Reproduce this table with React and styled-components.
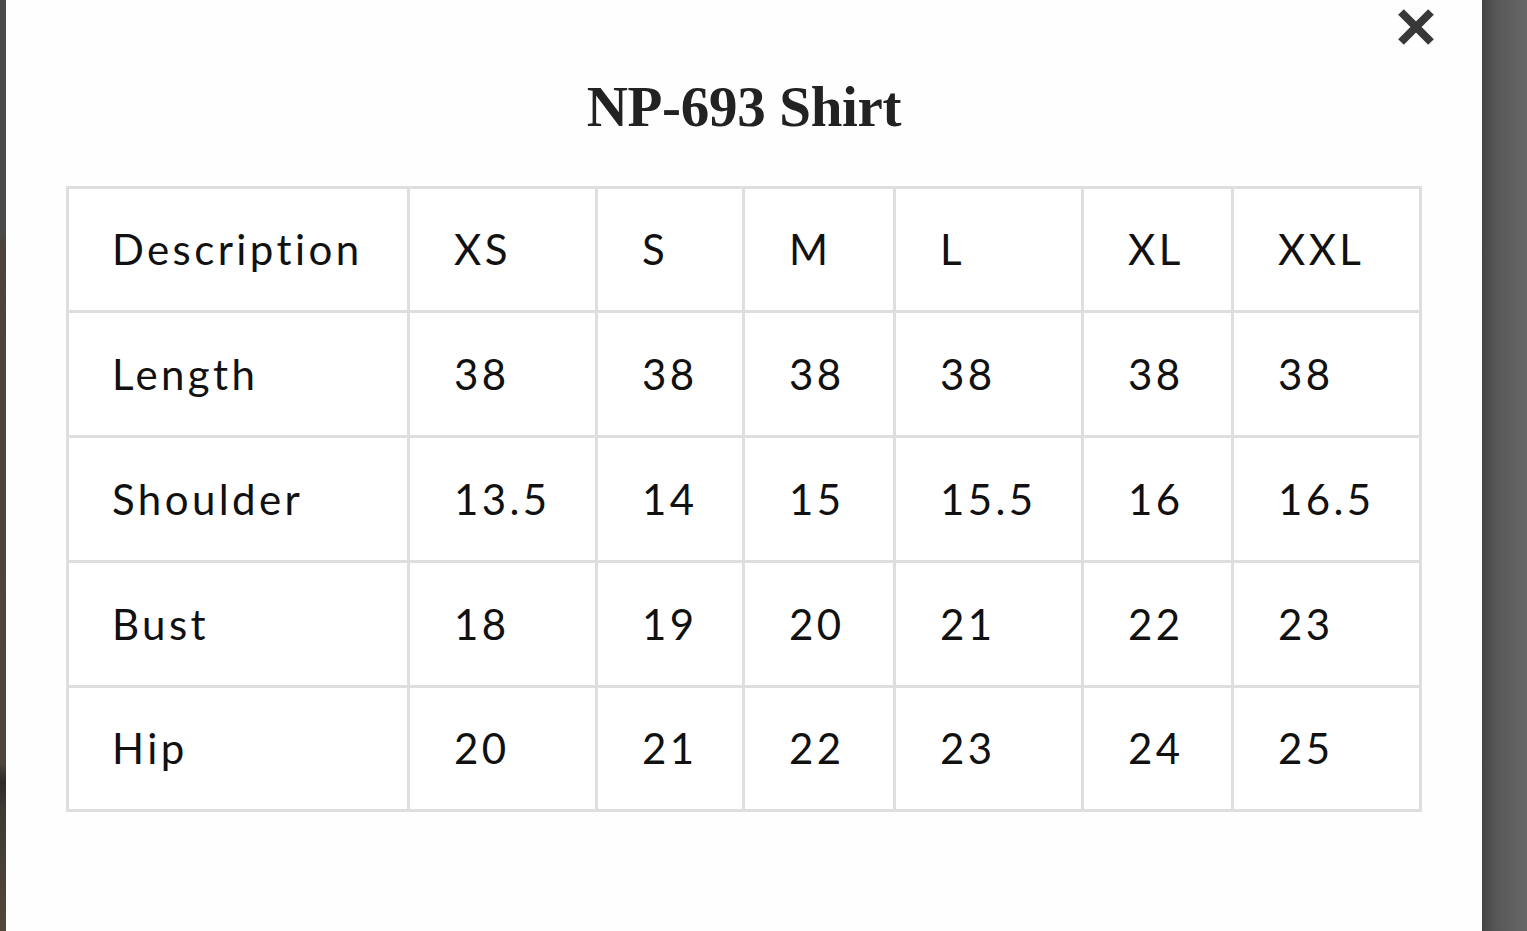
import React from "react";
import styled, { createGlobalStyle } from "styled-components";

const GlobalStyle = createGlobalStyle`
  html, body {
    margin: 0;
    padding: 0;
    background: #4b4b4b;
  }
  body {
    font-family: Lato, "Liberation Sans", sans-serif;
  }
`;

const Page = styled.div`
  display: flex;
  height: 931px;
  width: 1527px;
  overflow: hidden;
`;

const LeftEdge = styled.div`
  width: 6px;
  flex-shrink: 0;
  background: linear-gradient(
    to bottom,
    #4a4a4a 0%,
    #4a4a4a 25%,
    #4c443c 26%,
    #4e463e 82%,
    #2f2a25 84%,
    #3f3a32 87%,
    #54493a 100%
  );
`;

const RightEdge = styled.div`
  flex: 1;
  background: linear-gradient(to right, #454545 0%, #575757 30%, #676767 100%);
`;

const Modal = styled.div`
  position: relative;
  width: 1476px;
  flex-shrink: 0;
  background: #fefefe;
  padding: 0 60px;
  box-sizing: border-box;
`;

const CloseButton = styled.button`
  position: absolute;
  top: 7px;
  right: 46px;
  width: 40px;
  height: 40px;
  padding: 0;
  border: none;
  background: transparent;
  cursor: pointer;
`;

const Title = styled.h2`
  margin: 72px 0 0;
  height: 70px;
  line-height: 70px;
  text-align: center;
  font-family: "Liberation Serif", "DejaVu Serif", serif;
  font-weight: bold;
  font-size: 57px;
  color: #222;
  letter-spacing: -0.3px;
`;

const Grid = styled.div`
  margin-top: 44px;
  display: grid;
  grid-template-columns: 338px 185px 144px 148px 185px 147px 185px;
  grid-template-rows: 121px 122px 122px 122px 121px;
  gap: 3px;
  padding: 3px;
  background: #dedede;
`;

const Cell = styled.div`
  background: #fff;
  display: flex;
  align-items: center;
  padding-left: ${(p) => (p.$first ? "43px" : "44px")};
  padding-bottom: 1px;
  font-size: 42px;
  letter-spacing: 3.4px;
  color: #111;
`;

const sizes = ["XS", "S", "M", "L", "XL", "XXL"];

const rows = [
  ["Length", "38", "38", "38", "38", "38", "38"],
  ["Shoulder", "13.5", "14", "15", "15.5", "16", "16.5"],
  ["Bust", "18", "19", "20", "21", "22", "23"],
  ["Hip", "20", "21", "22", "23", "24", "25"],
];

const CloseIcon = () => (
  <svg width="40" height="40" viewBox="0 0 40 40">
    <path
      d="M5 5 L35 35 M35 5 L5 35"
      stroke="#383838"
      strokeWidth="8"
      strokeLinecap="butt"
    />
  </svg>
);

const App = () => {
  const all = [["Description", ...sizes], ...rows];
  return (
    <>
      <GlobalStyle />
      <Page>
        <LeftEdge />
        <Modal>
          <CloseButton aria-label="Close">
            <CloseIcon />
          </CloseButton>
          <Title>NP-693 Shirt</Title>
          <Grid>
            {all.map((row, r) =>
              row.map((val, c) => (
                <Cell key={`${r}-${c}`} $first={c === 0}>
                  {val}
                </Cell>
              ))
            )}
          </Grid>
        </Modal>
        <RightEdge />
      </Page>
    </>
  );
};

export default App;
